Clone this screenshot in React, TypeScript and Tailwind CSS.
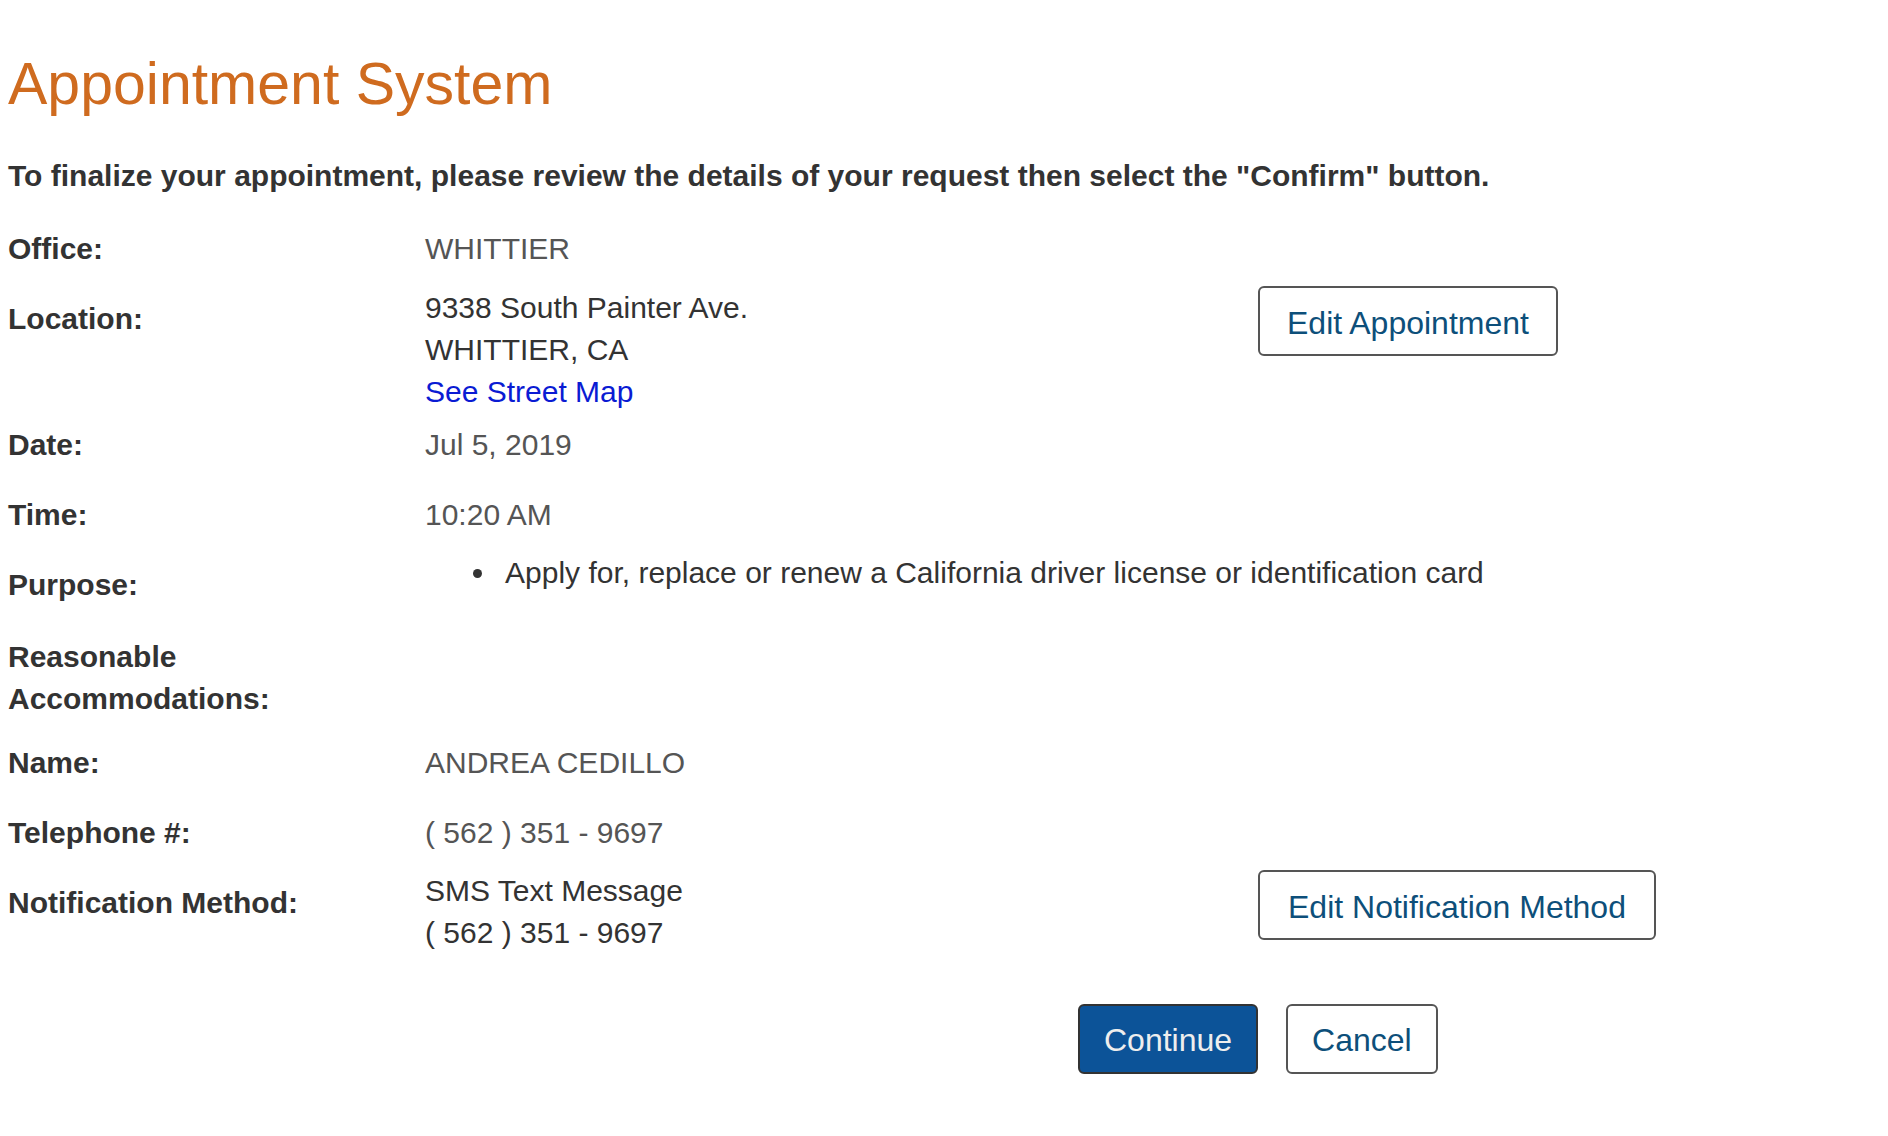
import React from "react";

const labelCls =
  "w-[417px] shrink-0 py-[14px] text-[30px] leading-[42px] font-bold text-[#333333]";
const valueGray = "py-[14px] text-[30px] leading-[42px] text-[#555555]";
const btnOutline =
  "h-[70px] rounded-[6px] border-2 border-[#555555] bg-white pt-[3px] text-[32px] leading-none text-[#0d4f7a]";

function Row({ label, children }: { label: React.ReactNode; children: React.ReactNode }) {
  return (
    <div className="flex items-start">
      <div className={labelCls}>{label}</div>
      {children}
    </div>
  );
}

export default function App() {
  return (
    <div className="min-h-screen bg-white pl-[8px] pt-[49px] font-['Liberation_Sans',Arial,sans-serif] text-[#333333]">
      <h1 className="text-[59px] font-normal leading-[70px] text-[#cf6b1f]">Appointment System</h1>
      <p className="mt-[36px] text-[30px] font-bold leading-[42px] text-[#333333]">
        To finalize your appointment, please review the details of your request then select the "Confirm" button.
      </p>

      <div className="mt-[17px] flex flex-col">
        <Row label="Office:">
          <div className={valueGray}>WHITTIER</div>
        </Row>

        <Row label="Location:">
          <div className="h-[126px] w-[833px] shrink-0 pt-[3px] text-[30px] leading-[42px] text-[#333333]">
            <div>9338 South Painter Ave.</div>
            <div>WHITTIER, CA</div>
            <a href="#" className="text-[#0a1bd3]">
              See Street Map
            </a>
          </div>
          <button className={`${btnOutline} mt-[2px] px-[27px]`}>Edit Appointment</button>
        </Row>

        <Row label="Date:">
          <div className={valueGray}>Jul 5, 2019</div>
        </Row>

        <Row label="Time:">
          <div className={valueGray}>10:20 AM</div>
        </Row>

        <Row label="Purpose:">
          <ul className="flex items-center pt-[2px] pl-[48px] text-[30px] leading-[42px] text-[#333333]">
            <li className="flex items-center">
              <span className="h-[9px] w-[9px] shrink-0 rounded-full bg-[#333333]" />
              <span className="ml-[23px]">
                Apply for, replace or renew a California driver license or identification card
              </span>
            </li>
          </ul>
        </Row>

        <div className="flex items-start">
          <div className="w-[417px] shrink-0 pt-[16px] pb-[8px] text-[30px] font-bold leading-[42px] text-[#333333]">
            Reasonable
            <br />
            Accommodations:
          </div>
        </div>

        <Row label="Name:">
          <div className={valueGray}>ANDREA CEDILLO</div>
        </Row>

        <Row label="Telephone #:">
          <div className={valueGray}>( 562 ) 351 - 9697</div>
        </Row>

        <Row label="Notification Method:">
          <div className="w-[833px] shrink-0 pt-[2px] text-[30px] leading-[42px] text-[#333333]">
            <div>SMS Text Message</div>
            <div>( 562 ) 351 - 9697</div>
          </div>
          <button className={`${btnOutline} mt-[2px] px-[28px]`}>Edit Notification Method</button>
        </Row>
      </div>

      <div className="mt-[50px] ml-[1070px] flex items-center gap-[28px] pb-[40px]">
        <button className="h-[70px] rounded-[6px] border-2 border-[#333333] bg-[#0c5398] px-[24px] pt-[2px] text-[32px] leading-none text-[#eeeeee]">
          Continue
        </button>
        <button className="h-[70px] rounded-[6px] border-2 border-[#555555] bg-white px-[24px] pt-[2px] text-[32px] leading-none text-[#0d4f7a]">
          Cancel
        </button>
      </div>
    </div>
  );
}
